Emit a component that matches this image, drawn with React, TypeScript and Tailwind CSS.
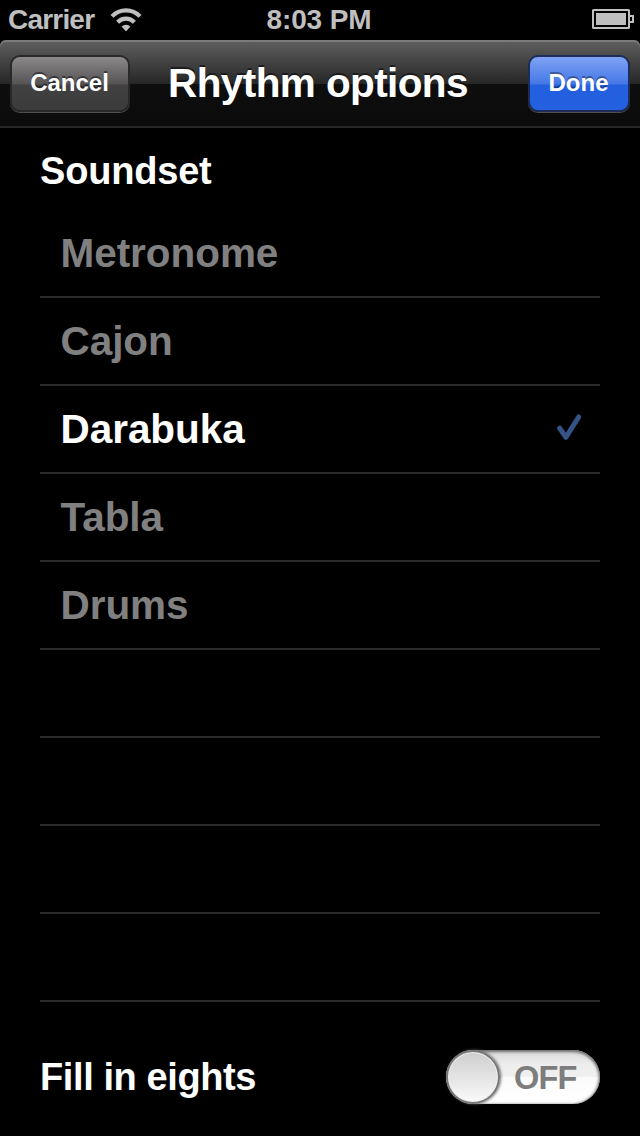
import { useState } from 'react';

const soundsets = ['Metronome', 'Cajon', 'Darabuka', 'Tabla', 'Drums'];
const emptyRows = [0, 1, 2, 3];

function WifiIcon() {
  return (
    <svg className="mb-0.5 ml-4 h-6 w-8" viewBox="0 0 32 24" fill="none" stroke="#bfbfbf" strokeWidth={4.2}>
      <path d="M2 9.4a19.3 19.3 0 0 1 28 0" />
      <path d="M7.6 15.3a11.6 11.6 0 0 1 16.8 0" />
      <path d="M16 24.5l-4.4-5a6.2 6.2 0 0 1 8.8 0z" fill="#bfbfbf" stroke="none" />
    </svg>
  );
}

function BatteryIcon() {
  return (
    <svg className="mb-0.5 h-5 w-[42px]" viewBox="0 0 42 20" fill="none">
      <rect x="1" y="1" width="36" height="18" rx="0.5" stroke="#bfbfbf" strokeWidth={2} />
      <rect x="4" y="4" width="30" height="12" fill="#bfbfbf" />
      <path d="M38 7h3v6h-3" stroke="#bfbfbf" strokeWidth={2} />
    </svg>
  );
}

function StatusBar() {
  return (
    <div className="grid h-10 grid-cols-[1fr_auto_1fr] items-center bg-black pl-2 pr-2.5 text-[28px] leading-[38px] text-[#bfbfbf]">
      <div className="flex h-[38px] items-center">
        <span className="tracking-[-0.8px]">Carrier</span>
        <WifiIcon />
      </div>
      <span className="h-[38px] tracking-[-0.1px]">8:03 PM</span>
      <div className="-mr-1 flex h-[38px] items-center justify-end">
        <BatteryIcon />
      </div>
    </div>
  );
}

function Header({ onCancel, onDone }: { onCancel: () => void; onDone: () => void }) {
  return (
    <div className="bg-black">
      <header className="grid h-[88px] grid-cols-[1fr_auto_1fr] items-start rounded-t-[6px] border-b-2 border-[#262626] bg-[linear-gradient(#606060_0px,#262626_44px,#0e0e0e_44px,#0b0b0b_86px)] pl-2.5 pr-2.5 pt-[15px] shadow-[inset_0_2px_0_#7b7b7b]">
        <button
          onClick={onCancel}
          className="h-[57px] w-[120px] rounded-[10px] border-2 border-[#292929] bg-[linear-gradient(#8b898a_0px,#555354_27px,#414141_28px,#3b3b3b_55px)] pr-px text-[24px] leading-[51px] text-white shadow-[0_1px_0_#505050] [text-shadow:0_-2px_0_rgba(0,0,0,0.45)]"
        >
          <span className="block h-[53px]">Cancel</span>
        </button>
        <h1 className="-ml-0.5 mr-0.5 text-[40.5px] leading-[56px] tracking-[-0.6px] text-white [text-shadow:0_-2px_0_rgba(0,0,0,0.5)]">
          Rhythm options
        </h1>
        <button
          onClick={onDone}
          className="h-[57px] w-[102px] justify-self-end rounded-[10px] border-2 border-[#1d2c58] bg-[linear-gradient(#80a3f5_0px,#4477e6_27px,#235fdf_28px,#2361e1_55px)] pr-px text-[24px] leading-[51px] text-white shadow-[0_1px_0_#505050] [text-shadow:0_-2px_0_rgba(0,0,0,0.35)]"
        >
          <span className="block h-[53px]">Done</span>
        </button>
      </header>
    </div>
  );
}

function Toggle({ on, onChange }: { on: boolean; onChange: (on: boolean) => void }) {
  return (
    <button
      role="switch"
      aria-checked={on}
      onClick={() => onChange(!on)}
      className="flex h-[54px] w-[154px] items-center rounded-full bg-[linear-gradient(#d8d8d8_0px,#ededed_14px,#f0f0f0_27px,#fbfbfb_27px,#ffffff_54px)] shadow-[inset_0_2px_3px_#707070,inset_-1px_0_3px_#888888]"
    >
      <span className="h-[54px] w-[54px] rounded-full border-2 border-[#777777] bg-[linear-gradient(#cecece,#fafafa)] shadow-[inset_0_0_0_1px_#f0f0f0,1px_0_3px_#666666]" />
      <span className="ml-3.5 pt-0.5 text-[32.5px] leading-[54px] tracking-[-0.8px] text-[#7d7d7d]">{on ? 'ON' : 'OFF'}</span>
    </button>
  );
}

export default function App() {
  const [selected, setSelected] = useState('Darabuka');
  const [fillEights, setFillEights] = useState(false);

  const reset = () => {
    setSelected('Darabuka');
    setFillEights(false);
  };

  return (
    <div className="flex h-[1136px] w-[640px] flex-col overflow-hidden bg-black font-['Liberation_Sans',Arial,sans-serif] font-bold">
      <StatusBar />
      <Header onCancel={reset} onDone={() => {}} />

      <main className="px-10">
        <h2 className="h-[82px] pt-[15px] text-[38px] leading-[56px] tracking-[-0.2px] text-white">Soundset</h2>
        <ul>
          {soundsets.map((name) => (
            <li key={name} className="border-b-2 border-[#2b2b2b]">
              <button
                onClick={() => setSelected(name)}
                className={`flex h-[86px] w-full items-center justify-between pl-[20.5px] pr-[17px] pt-0.5 text-[40.5px] tracking-[-0.05px] ${
                  name === selected ? 'text-white' : 'text-[#808080]'
                }`}
              >
                <span className="pb-0.5">{name}</span>
                {name === selected && (
                  <svg className="h-8 w-[26px]" viewBox="0 0 26 32" fill="none" stroke="#365388" strokeWidth={5}>
                    <path strokeLinecap="round" strokeLinejoin="round" d="M2.7 14.2L9 23.2L21.7 3" />
                  </svg>
                )}
              </button>
            </li>
          ))}
          {emptyRows.map((row) => (
            <li key={row} className="h-[88px] border-b-2 border-[#2b2b2b]" />
          ))}
        </ul>
        <div className="flex items-center justify-between pt-12">
          <span className="text-[38px] leading-[54px] tracking-[-0.4px] text-white">Fill in eights</span>
          <Toggle on={fillEights} onChange={setFillEights} />
        </div>
      </main>
    </div>
  );
}
